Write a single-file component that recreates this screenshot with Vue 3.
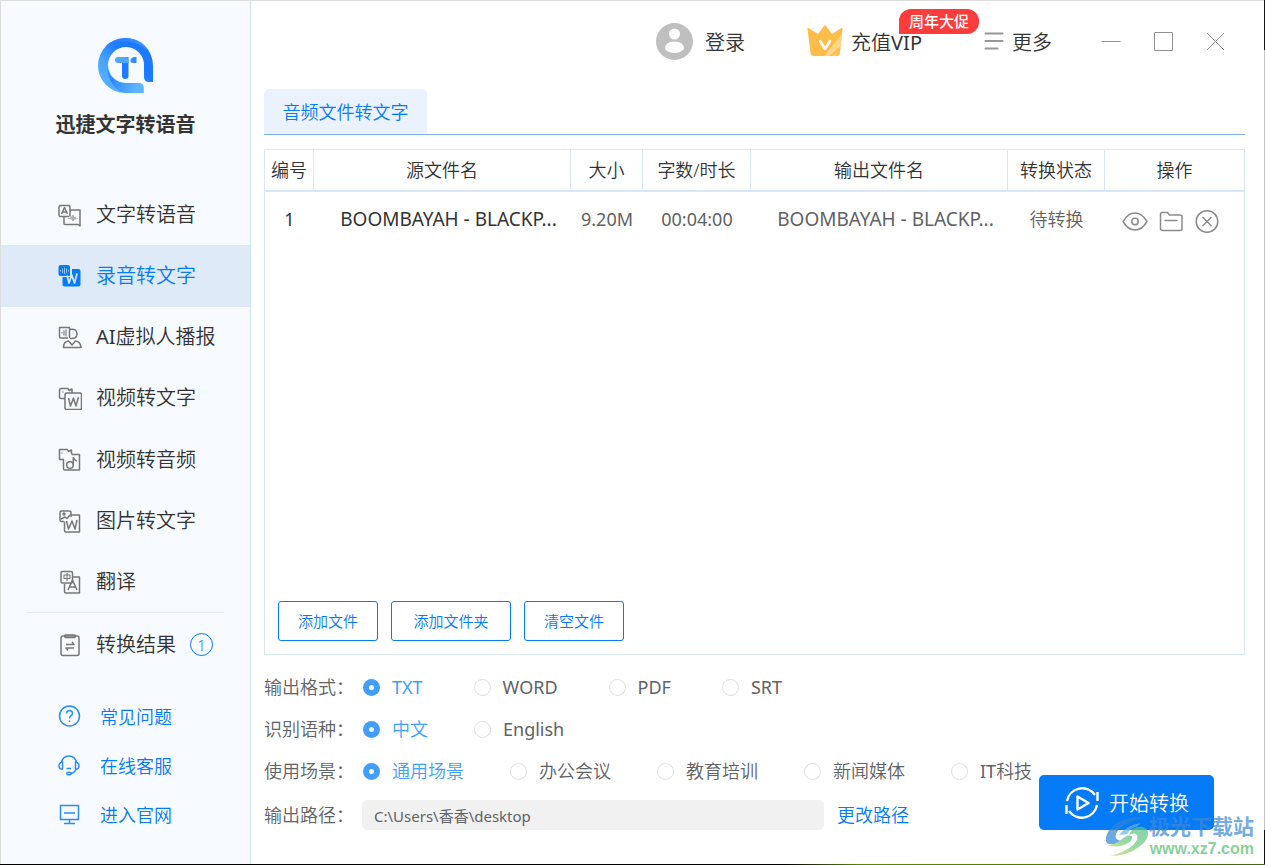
<script setup>
import { ref } from 'vue'

const navItems = ['文字转语音', '录音转文字', 'AI虚拟人播报', '视频转文字', '视频转音频', '图片转文字', '翻译']
const active = ref(1)

const links = ['常见问题', '在线客服', '进入官网']

const groups = ref([
  { name: 'format', label: '输出格式：', value: 'TXT', options: ['TXT', 'WORD', 'PDF', 'SRT'] },
  { name: 'language', label: '识别语种：', value: '中文', options: ['中文', 'English'] },
  { name: 'scene', label: '使用场景：', value: '通用场景', options: ['通用场景', '办公会议', '教育培训', '新闻媒体', 'IT科技'] },
])

const path = ref('C:\\Users\\香香\\desktop')

// Splits a string into Latin and Chinese runs, so that each gets its own weight.
const runs = (text) => text.match(/[A-Za-z]+|[^A-Za-z]+/g)
const isLatin = (run) => /[A-Za-z]/.test(run)
</script>

<template>
  <div class="window">
    <aside class="sidebar">
      <div class="brand">
        <svg class="logo" viewBox="0 0 55 55" aria-hidden="true">
          <defs>
            <linearGradient id="ring" x1="0" y1="1" x2="1" y2="0">
              <stop offset="0" stop-color="#5fb9ff" />
              <stop offset=".35" stop-color="#4aa3ff" />
              <stop offset=".6" stop-color="#1c7bff" />
              <stop offset="1" stop-color="#1b78ff" />
            </linearGradient>
            <linearGradient id="arm" x1="0" y1="0" x2="1" y2="0.3">
              <stop offset="0" stop-color="#1b7bff" />
              <stop offset="1" stop-color="#5cb6ff" />
            </linearGradient>
            <linearGradient id="fold" x1="0" y1="0" x2="1" y2="0">
              <stop offset="0" stop-color="#1b78ff" />
              <stop offset="1" stop-color="#4b9dff" />
            </linearGradient>
          </defs>
          <path fill="url(#ring)" d="M55 27.500A27.500 27.500 0 1 0 27.500 55H45.500V50q0-5-5-5H27.500A18 18 0 1 1 46 27.500V39q0 5 5 5h4z" />
          <path fill="url(#arm)" d="M9.500 28C9.500 44 18 53 27.500 55H45.500V50q0-5-5-5H27.500C17 45 10 38 9.500 28z" />
          <path fill="url(#fold)" opacity=".8" d="M8 8C15 1 27-2 38 2 45 5 50 10 52 15 42 3 24 0 8 8z" />
          <path fill="#1f7cff" d="M24 19h6.500v19q0 3-3.200 3T24 38z" />
          <path fill="#4fa9ff" d="M20 19h7q3.500 0 3.500 3.500V25H20q-3 0-3-3t3-3z" />
          <path fill="#2f8dff" d="M36 19h2.500v6H35q-2.500 0-2.500-2.500T36 19z" />
        </svg>
        <h1>迅捷文字转语音</h1>
      </div>

      <nav class="nav">
        <button
          v-for="(item, i) in navItems"
          :key="item"
          type="button"
          class="nav-item"
          :class="{ active: active === i }"
          @click="active = i"
        >
          <svg class="icon" viewBox="0 0 24 24" aria-hidden="true">
            <g v-if="i === 0">
              <path d="M11 13.500H2.500q-1.500 0-1.500-1.500V4q0-1.500 1.500-1.500h8q1.500 0 1.500 1.500v9.500" />
              <path d="M12 7h10v16l-2-1.500H7q-1 0-1-1v-7" />
              <path d="M3.500 11l3-6.500L9.500 11M4.500 9h4" />
              <path d="M11 15v1M13 13.500v3M15 12v6M17 14v2.500M19 15v.5" class="thin" />
            </g>
            <g v-else-if="i === 1">
              <path class="solid" d="M3 1h7q2 0 2 2v2H7Q5 5 5 7v5H2.500Q.5 12 .5 10V3q0-2 2.500-2z" />
              <path class="solid" d="M5 5h7v7H5z" />
              <path class="solid" d="M14 5h6.500q2 0 2 2v13.500q0 2-2 2h-14q-2 0-2-2V13H12q2 0 2-2z" />
              <path class="wave" d="M2.500 6v1.500M4.500 4.500v4.500M6.500 3.500v6.500M8.500 4.500v4.500M10.500 6v1.500" />
              <path class="letter" d="M9 11.500l2 7.500 2.800-8 2.700 8L19 9.500" />
            </g>
            <g v-else-if="i === 2">
              <path d="M10 13H3q-1.500 0-1.500-1.500v-9h10V13" />
              <path d="M4 7v1.500M6 5.500v5M8 4.500v7" class="thin" />
              <path d="M12 4.500q7-1 7 4.500 0 5-7 4.500" />
              <path d="M5.500 22.500q0-6 5-6.500l3.500 4 3.500-4q5 .5 5.500 6.500z" />
            </g>
            <g v-else-if="i === 3">
              <path d="M7 12.500H3q-1.500 0-1.500-1.500V4Q1.500 2.500 3 2.500h7l1 2 3-1.500V7" />
              <path d="M9 7h13q1.500 0 1.500 1.500V22q0 1.500-1.500 1.500H8.500Q7 23.500 7 22V9q0-2 2-2z" />
              <path d="M4.500 6h1" /><path d="M10.500 12l2 8 3-8 2.500 8 2.500-9" />
            </g>
            <g v-else-if="i === 4">
              <path d="M6 11.500H1.500v-10h8l1 2 3-1.500v4" />
              <path d="M13.500 6.500h8V22H7q-1.500 0-1.500-1.500V11.500" />
              <path d="M3.500 5h1" /><circle cx="12" cy="17" r="3.300" /><path d="M15.300 17V9.500q1 3 3.500 3.500" />
            </g>
            <g v-else-if="i === 5">
              <path d="M6 12.500H3.500Q2 12.500 2 11V3.500Q2 2 3.500 2h8Q13 2 13 3.500V8" />
              <path d="M13 6h8.500v17H8q-1.500 0-1.500-1.500v-9" />
              <circle cx="6" cy="5" r="1" /><path d="M3 10l4-2 2 1.500L12 6" />
              <path d="M8.500 12l2 8 3.500-8 3 8L19 11" />
            </g>
            <g v-else>
              <rect x="3" y="1.500" width="11.500" height="11.500" rx="1.500" />
              <path d="M15 7h6.500v16H8q-1.500 0-1.500-1.500V14" />
              <path d="M6 5h6v3.500H6zM9 3v8" class="thin" />
              <path d="M10 20l4.500-10L19 20M11.500 17h6" />
            </g>
          </svg>
          <span><span v-for="run in runs(item)" :key="run" :class="{ latin: isLatin(run) }">{{ run }}</span></span>
        </button>
      </nav>

      <button type="button" class="results">
        <svg class="icon" viewBox="0 0 24 24" aria-hidden="true">
          <path d="M5 3h14q2 0 2 2v15.500q0 2-2 2H5q-2 0-2-2V5q0-2 2-2z" />
          <path d="M7 2h10v2.500H7z" /><path d="M8 11.500h8l-2-2.500M16 15H8l2 2.500" />
        </svg>
        <span>转换结果</span>
        <span class="count">1</span>
      </button>

      <div class="links">
        <a v-for="(link, i) in links" :key="link" href="#">
          <svg class="icon" viewBox="0 0 24 24" aria-hidden="true">
            <g v-if="i === 0">
              <circle cx="11.500" cy="11" r="10" />
              <path d="M8.500 8.500q.2-3 3-3t3 2.700q0 1.500-1.500 2.500t-1.500 2.800M11.500 15.500v1.500" />
            </g>
            <g v-else-if="i === 1">
              <path d="M3.500 9q1-7 7.500-7T18.500 9" />
              <path d="M4.500 8v7H3q-2-.5-2-3.500T4.500 8zM17.500 8v7H19q2-.5 2-3.500T17.500 8zM18 15q-1 3.500-5 4.500M8.500 14.500h4.500" />
              <ellipse cx="11" cy="19.500" rx="2.200" ry="1.300" />
            </g>
            <g v-else>
              <path d="M2.500 2.500h18v14h-18zM6 10h11M11.500 17v3M6 20.500h11" />
            </g>
          </svg>
          <span>{{ link }}</span>
        </a>
      </div>
    </aside>

    <main class="main">
      <header class="topbar">
        <button type="button" class="top-action">
          <svg class="avatar" viewBox="0 0 37 37" aria-hidden="true">
            <circle cx="18.500" cy="18.500" r="18.500" fill="#bfbfbf" />
            <circle cx="18.500" cy="11" r="5.500" fill="#fff" />
            <path fill="#fff" d="M9 26q0-7.500 9.500-7.500T28 26q-3.500 4-9.500 4T9 26z" />
          </svg>
          <span class="caption">登录</span>
        </button>
        <button type="button" class="top-action vip">
          <svg class="crown" viewBox="0 0 36 32" aria-hidden="true">
            <path fill="#ffbc48" d="M.5 4q-.5-2 1-1L11 9l6-8q1-1.500 2 0l6 8 9.500-6q1.500-1 1 1l-2.500 24q-.5 3-3 3H7q-3 0-3.500-3z" />
            <path fill="#ffdda0" d="M35 9l-1.500 12-11 10H17zM33 26l-5.500 5H25z" opacity=".75" />
            <path fill="none" stroke="#fff" stroke-width="2.600" stroke-linecap="round" stroke-linejoin="round" d="M13 16l5 8 5-8" />
          </svg>
          <span class="caption">充值<span class="latin">VIP</span></span>
          <span class="promo">周年大促</span>
        </button>
        <button type="button" class="top-action more">
          <svg class="menu" viewBox="0 0 20 20" aria-hidden="true">
            <path fill="none" stroke="#979797" stroke-width="2" stroke-linecap="round" d="M1.500 2.500h17M1.500 10h17M1.500 17.500h12" />
          </svg>
          <span class="caption">更多</span>
        </button>
        <div class="controls">
          <button type="button" aria-label="最小化"><svg viewBox="0 0 20 20"><path d="M.5 10.500h19" /></svg></button>
          <button type="button" aria-label="最大化"><svg viewBox="0 0 20 20"><path d="M1.500 1.500h18v18h-18z" /></svg></button>
          <button type="button" aria-label="关闭"><svg viewBox="0 0 20 20"><path d="M2 2l17 17M19 2l-17 17" /></svg></button>
        </div>
      </header>

      <div class="tabs">
        <button type="button" class="tab">音频文件转文字</button>
      </div>

      <section class="files">
        <table>
          <colgroup>
            <col class="c-no"><col><col class="c-size"><col class="c-time"><col><col class="c-state"><col class="c-act">
          </colgroup>
          <thead>
            <tr>
              <th>编号</th><th>源文件名</th><th>大小</th><th>字数/时长</th><th>输出文件名</th><th>转换状态</th><th>操作</th>
            </tr>
          </thead>
          <tbody>
            <tr>
              <td class="dark latin">1</td>
              <td class="dark latin name">BOOMBAYAH - BLACKP...</td>
              <td class="latin">9.20M</td>
              <td class="latin">00:04:00</td>
              <td class="latin name">BOOMBAYAH - BLACKP...</td>
              <td>待转换</td>
              <td>
                <div class="row-actions">
                  <button type="button" aria-label="预览">
                    <svg viewBox="0 0 26 24"><path d="M1 12.500Q6 4 13 4t12 8.500Q20 21 13 21T1 12.500z" /><circle cx="13" cy="12.500" r="3.200" /></svg>
                  </button>
                  <button type="button" aria-label="打开文件夹">
                    <svg viewBox="0 0 26 24"><path d="M4 3.500h5.500l2 2.500H22q2 0 2 2v11.500q0 2-2 2H4.500q-2 0-2-2v-14q0-2 1.500-2zM6.500 11.500h13" /></svg>
                  </button>
                  <button type="button" aria-label="删除">
                    <svg viewBox="0 0 26 24"><circle cx="13" cy="12.500" r="10.800" /><path d="M8.500 8l9 9M17.500 8l-9 9" /></svg>
                  </button>
                </div>
              </td>
            </tr>
          </tbody>
        </table>
        <div class="file-buttons">
          <button type="button">添加文件</button>
          <button type="button" class="wide">添加文件夹</button>
          <button type="button">清空文件</button>
        </div>
      </section>

      <section class="settings">
        <div class="fields">
          <div v-for="g in groups" :key="g.name" class="field" role="radiogroup" :aria-label="g.label">
            <span class="label">{{ g.label }}</span>
            <div class="options" :class="g.name">
              <label v-for="o in g.options" :key="o" :class="{ checked: g.value === o }">
                <input v-model="g.value" type="radio" :name="g.name" :value="o">
                <span><span v-for="run in runs(o)" :key="run" :class="{ latin: isLatin(run) }">{{ run }}</span></span>
              </label>
            </div>
          </div>
          <div class="field path-field">
            <label class="label" for="path">输出路径：</label>
            <input id="path" v-model="path" type="text" class="path">
            <a href="#" class="change">更改路径</a>
          </div>
        </div>
        <button type="button" class="start">
          <svg viewBox="0 0 36 36" aria-hidden="true">
            <path d="M3 16A15.500 15.500 0 0 1 31 10M33.500 7v9M33 20A15.500 15.500 0 0 1 5 26M2.500 20v9" />
            <path d="M13.500 11.500v13l11-6.500z" />
          </svg>
          <span class="caption">开始转换</span>
        </button>
      </section>
    </main>

    <div class="watermark" aria-hidden="true">
      <svg viewBox="0 0 44 42">
        <defs>
          <linearGradient id="leaf" x1="0" y1="1" x2="1" y2="0">
            <stop offset="0" stop-color="#c3dc62" />
            <stop offset=".5" stop-color="#6fcb7b" />
            <stop offset="1" stop-color="#4fc08a" />
          </linearGradient>
        </defs>
        <path fill="#2f86d6" d="M1 25C0 12 16 0 40 1 26 5 14 10 11 18q-2 6 6 7-2 3-7 3-8 1-9-3z" />
        <path fill="#65b5e6" d="M14 19Q22 9 36 7L31 11Q26 12 22 18z" />
        <path fill="url(#leaf)" d="M32 11q9-1 11 5 1 8-9 15-12 9-29 9 16-4 23-11 6-6 4-10-2-3-8 0 2-6 8-8z" />
        <path fill="url(#leaf)" d="M16 24Q22 18 27 20 28 26 19 29 10 32 2 29q8 0 14-5z" />
      </svg>
      <div>
        <p class="site">极光下载站</p>
        <p class="url">www.xz7.com</p>
      </div>
    </div>
  </div>
</template>

<style>
html,
body {
  margin: 0;
  background: #fff;
}
</style>

<style scoped>
* {
  box-sizing: border-box;
}

.window {
  position: relative;
  display: flex;
  min-height: 100vh;
  border: 1px solid #ddd;
  background: #fff;
  color: #333;
  font-family: "Noto Sans", "Noto Sans CJK SC", sans-serif;
  font-size: 18px;
  font-weight: 350;
  line-height: 24px;
}

.window::before,
.window::after {
  content: "";
  position: absolute;
  right: -1px;
  bottom: -1px;
}

.window::before {
  top: -1px;
  width: 1px;
  background: linear-gradient(#0a1a22 0 50px, #c4c4c4 50px 830px, #111 830px);
}

.window::after {
  left: -1px;
  height: 1px;
  background: linear-gradient(90deg, #000 0 62%, #5a8a00 68%, #3f6a08 100%);
}

.latin {
  font-weight: 400;
}

button {
  padding: 0;
  border: 0;
  background: none;
  color: inherit;
  font: inherit;
  cursor: pointer;
}

a {
  color: #067bf6;
  text-decoration: none;
}

svg {
  display: block;
  flex: none;
}

.sidebar {
  flex: none;
  width: 250px;
  border-right: 1px solid #cfe2f5;
  background: #f7faff;
}

.brand {
  display: flex;
  flex-direction: column;
  align-items: center;
  height: 183px;
  padding-top: 37px;
}

.logo {
  width: 55px;
  height: 55px;
}

h1 {
  margin: 18px 0 0;
  font-size: 20px;
  font-weight: 700;
  line-height: 28px;
}

.nav {
  display: grid;
  grid-template-rows: repeat(7, 1fr);
  height: 429px;
}

.nav-item,
.results {
  display: flex;
  align-items: center;
  width: 100%;
  padding-left: 57px;
  gap: 14px;
  font-size: 20px;
}

.nav-item.active {
  background: #dfeaf8;
  color: #067bf6;
}

.icon {
  width: 24px;
  height: 24px;
  fill: none;
  stroke: #777;
  stroke-width: 1.5;
  stroke-linejoin: round;
}

.icon .thin {
  stroke-width: 1.1;
}

.icon .solid {
  fill: #067bf6;
  stroke: none;
}

.icon .wave {
  stroke: #8cc2fb;
  stroke-width: 1;
}

.icon .letter {
  stroke: #cfe4ff;
  stroke-width: 1.8;
}

.results {
  position: relative;
  height: 63px;
}

.results::before {
  content: "";
  position: absolute;
  top: -1px;
  left: 25px;
  right: 26px;
  border-top: 1px solid #e0edf9;
}

.count {
  display: grid;
  place-items: center;
  width: 23px;
  height: 23px;
  border: 1px solid #067bf6;
  border-radius: 50%;
  color: #067bf6;
  font-size: 14px;
}

.links {
  display: grid;
  grid-template-rows: repeat(3, 49px);
  padding-top: 16px;
}

.links a {
  display: flex;
  align-items: center;
  gap: 18px;
  padding-left: 57px;
}

.links .icon {
  stroke: #2a8cf8;
}

.main {
  flex: 1;
  display: flex;
  flex-direction: column;
  min-width: 0;
  padding: 0 19px 0 13px;
}

.topbar {
  display: flex;
  align-items: center;
  justify-content: flex-end;
  height: 80px;
  padding-right: 20px;
  font-size: 20px;
}

.top-action {
  display: flex;
  align-items: center;
  white-space: nowrap;
}

.caption {
  padding-top: 3px;
}

.avatar {
  width: 37px;
  height: 37px;
  margin-right: 12px;
}

.vip {
  position: relative;
  margin-left: 62px;
}

.crown {
  width: 36px;
  height: 32px;
  margin-right: 8px;
}

.promo {
  position: absolute;
  left: 92px;
  bottom: 23px;
  width: 80px;
  height: 25px;
  border-radius: 12px 12px 12px 0;
  background: #ff3c3c;
  color: #fff;
  font-size: 15px;
  font-weight: 500;
  line-height: 25px;
  text-align: center;
}

.more {
  margin-left: 62px;
}

.menu {
  width: 20px;
  height: 20px;
  margin-right: 8px;
}

.controls {
  display: flex;
  gap: 32px;
  margin-left: 49px;
}

.controls svg {
  width: 20px;
  height: 20px;
  fill: none;
  stroke: #929292;
  stroke-width: 1;
}

.tabs {
  display: flex;
  margin-top: 8px;
  border-bottom: 1px solid #7eb3ea;
}

.tab {
  width: 163px;
  height: 45px;
  border-radius: 5px 5px 0 0;
  background: #eaf2ff;
  color: #067bf6;
}

.files {
  flex: 1;
  display: flex;
  flex-direction: column;
  justify-content: space-between;
  margin-top: 14px;
  border: 1px solid #d8e8f8;
}

table {
  width: 100%;
  table-layout: fixed;
  border-collapse: separate;
  border-spacing: 0;
  text-align: center;
}

.c-no {
  width: 49px;
}

.c-size {
  width: 72px;
}

.c-time {
  width: 108px;
}

.c-state {
  width: 97px;
}

.c-act {
  width: 139px;
}

th {
  height: 42px;
  padding: 0;
  border-right: 1px solid #d8e8f8;
  border-bottom: 2px solid #d8e8f8;
  font-weight: inherit;
}

th:last-child {
  border-right: 0;
}

td {
  height: 53px;
  padding: 0;
  color: #606266;
  white-space: nowrap;
}

td.dark {
  color: #333;
}

td.name {
  padding-left: 12px;
  font-size: 19px;
}

.row-actions {
  display: flex;
  justify-content: center;
  gap: 10px;
  padding: 4px 7px 0 0;
}

.row-actions svg {
  width: 26px;
  height: 24px;
  fill: none;
  stroke: #8c8c8c;
  stroke-width: 1.5;
  stroke-linejoin: round;
}

.file-buttons {
  display: flex;
  gap: 13px;
  padding: 13px;
}

.file-buttons button {
  width: 100px;
  height: 40px;
  border: 1px solid #067bf6;
  border-radius: 3px;
  color: #067bf6;
  font-size: 15px;
}

.file-buttons .wide {
  width: 120px;
}

.settings {
  display: flex;
  align-items: flex-end;
  justify-content: space-between;
  padding: 11px 31px 34px 0;
  color: #606266;
}

.field {
  display: flex;
  align-items: center;
  height: 42px;
  white-space: nowrap;
}

.label {
  flex: none;
  width: 98px;
}

.options {
  display: flex;
  gap: 45px;
}

.options.format {
  gap: 50px;
}

.options label {
  display: flex;
  align-items: center;
  gap: 12px;
}

.options input {
  appearance: none;
  width: 17px;
  height: 17px;
  margin: 0 0 0 1px;
  border: 1px solid #dcdfe6;
  border-radius: 50%;
  background: #fff;
}

.options .checked {
  color: #409eff;
}

.options input:checked {
  border: 6px solid #409eff;
}

.path-field {
  height: 30px;
  margin-top: 8px;
}

.path {
  width: 462px;
  height: 30px;
  padding: 0 12px;
  border: 0;
  border-radius: 5px;
  background: #f1f1f1;
  color: #606266;
  font: inherit;
  font-size: 15px;
  font-weight: 400;
}

.change {
  margin-left: 13px;
}

.start {
  display: flex;
  flex: none;
  align-items: center;
  justify-content: center;
  gap: 9px;
  width: 175px;
  height: 55px;
  border-radius: 5px;
  background: #067bf8;
  color: #fff;
  font-size: 20px;
}

.start svg {
  width: 36px;
  height: 36px;
  fill: none;
  stroke: #fff;
  stroke-width: 2.4;
  stroke-linejoin: round;
}

.watermark {
  position: absolute;
  right: 10px;
  bottom: 5px;
  display: flex;
  align-items: center;
  opacity: 0.7;
  pointer-events: none;
}

.watermark svg {
  width: 44px;
  height: 42px;
}

.watermark p {
  margin: 0;
  font-family: "Liberation Sans", "Noto Sans CJK SC", sans-serif;
  font-weight: 700;
}

.watermark .site {
  color: #3c88d8;
  font-size: 21px;
  line-height: 24px;
}

.watermark .url {
  color: #55c070;
  font-size: 16px;
  line-height: 20px;
  text-align: right;
}
</style>
